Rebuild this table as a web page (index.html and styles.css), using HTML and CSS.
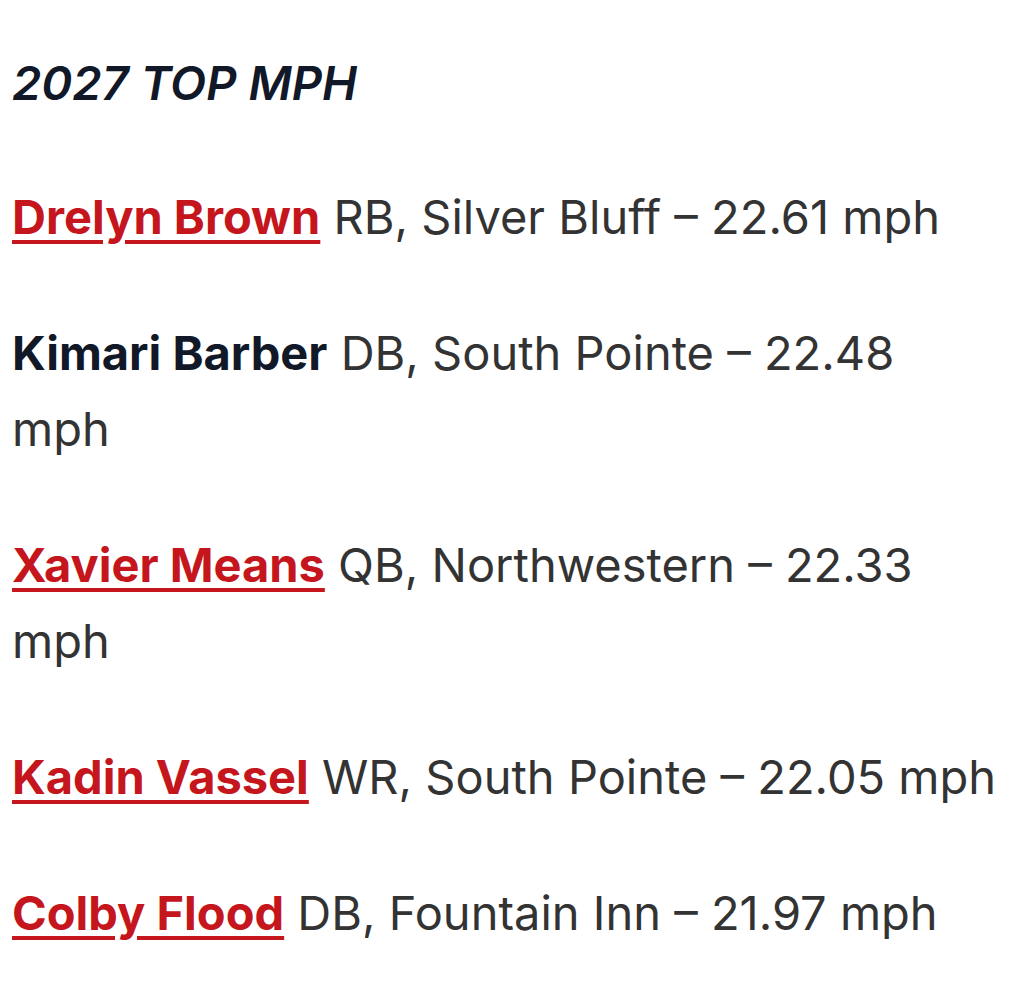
FILE: index.html
```html
<!DOCTYPE html>
<html>
<head>
  <title>2027 Top MPH</title>
  <link rel="stylesheet" href="styles.css">
</head>
<body>
  <div class="article">
    <h3 class="list-title">2027 TOP MPH</h3>

    <p><a href="#">Drelyn Brown</a> RB, Silver Bluff – 22.61 mph</p>
    <p><strong>Kimari Barber</strong> DB, South Pointe – 22.48 mph</p>
    <p><a href="#">Xavier Means</a> QB, Northwestern – 22.33 mph</p>
    <p><a href="#">Kadin Vassel</a> WR, South Pointe – 22.05 mph</p>
    <p><a href="#">Colby Flood</a> DB, Fountain Inn – 21.97 mph</p>
  </div>
</body>
</html>
```

FILE: styles.css
```css
body {
  margin: 0;
  background: #fff;
  font-family: Inter, "Noto Sans", sans-serif;
}

.article {
  padding: 45px 36px 0 12px;
  font-size: 47px;
  line-height: 76px;
  color: #333;
}

.list-title {
  margin: 0 0 58px;
  font-size: 47px;
  font-style: italic;
  font-weight: 600;
  color: #111827;
}

.article p {
  margin: 0 0 60px;
}

.article a {
  color: #c4161c;
  font-weight: 700;
  text-decoration: underline;
  text-underline-offset: 6px;
}

.article strong {
  color: #111827;
  font-weight: 700;
}
```
